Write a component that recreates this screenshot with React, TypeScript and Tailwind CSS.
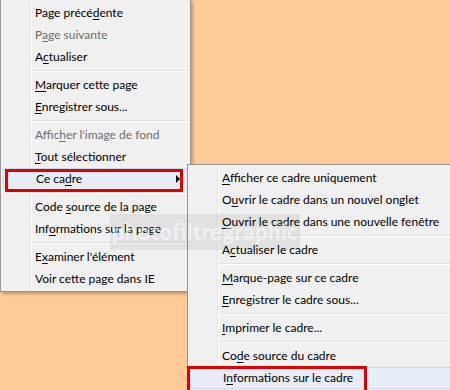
import React from "react";

type Entry =
  | { sep: true }
  | { sep?: false; label: string; key?: number; disabled?: boolean; hover?: boolean; sub?: boolean };

const mainMenu: Entry[] = [
  { label: "Page précédente", key: 10 },
  { label: "Page suivante", key: 1, disabled: true },
  { label: "Actualiser", key: 1 },
  { sep: true },
  { label: "Marquer cette page", key: 0 },
  { label: "Enregistrer sous...", key: 0 },
  { sep: true },
  { label: "Afficher l'image de fond", key: 5, disabled: true },
  { label: "Tout sélectionner", key: 0 },
  { label: "Ce cadre", key: 5, hover: true, sub: true },
  { sep: true },
  { label: "Code source de la page", key: 5 },
  { label: "Informations sur la page", key: 3 },
  { sep: true },
  { label: "Examiner l'élément", key: 1 },
  { label: "Voir cette page dans IE" },
];

const subMenu: Entry[] = [
  { label: "Afficher ce cadre uniquement", key: 0 },
  { label: "Ouvrir le cadre dans un nouvel onglet", key: 1 },
  { label: "Ouvrir le cadre dans une nouvelle fenêtre", key: 0 },
  { sep: true },
  { label: "Actualiser le cadre", key: 1 },
  { sep: true },
  { label: "Marque-page sur ce cadre", key: 0 },
  { label: "Enregistrer le cadre sous...", key: 0 },
  { sep: true },
  { label: "Imprimer le cadre...", key: 0 },
  { sep: true },
  { label: "Code source du cadre", key: 2 },
  { label: "Informations sur le cadre", key: 1, hover: true },
];

const Label = ({ text, k }: { text: string; k?: number }) => {
  if (k === undefined) return <>{text}</>;
  return (
    <>
      {text.slice(0, k)}
      <span className="underline underline-offset-2">{text[k]}</span>
      {text.slice(k + 1)}
    </>
  );
};

const Menu = ({ items }: { items: Entry[] }) => (
  <div className="relative flex flex-col">
    {/* gutter */}
    <div className="absolute top-0 bottom-0 left-[27px] flex">
      <div className="w-px bg-[#e2e3e3]" />
      <div className="w-px bg-white" />
    </div>
    {items.map((it, i) =>
      it.sep ? (
        <div key={i} className="flex h-[6px] flex-col justify-center pr-[2px] pl-[29px]">
          <div className="h-px bg-[#e0e0e0]" />
          <div className="h-px bg-white" />
        </div>
      ) : (
        <div
          key={i}
          className={
            "relative flex h-[22px] items-center rounded-[3px] pl-[32px] " +
            (it.hover ? "border border-[#cddaea] bg-[#e6edf7] pl-[31px] " : "") +
            (it.disabled ? "text-[#6d6d6d]" : "text-black")
          }
        >
          <span className="whitespace-nowrap">
            <Label text={it.label} k={it.key} />
          </span>
          {it.sub && (
            <svg className="absolute right-[6px]" width="5" height="8" viewBox="0 0 5 8">
              <path d="M0 0 L4 4 L0 8 Z" fill="#000" />
            </svg>
          )}
        </div>
      )
    )}
  </div>
);

export default function App() {
  return (
    <div
      className="relative h-[390px] w-[450px] overflow-hidden bg-[#ffca96] text-[12px] leading-none"
      style={{ fontFamily: "Lato, 'Noto Sans', sans-serif" }}
    >
      <div className="absolute top-[-1px] left-0 w-[191px] border border-[#979797] bg-[#f0f0f0] px-[2px] pt-[2px] pb-px shadow-[2px_2px_3px_rgba(0,0,0,0.25)]">
        <Menu items={mainMenu} />
      </div>

      <div className="absolute top-[164px] left-[187px] w-[280px] border border-[#979797] bg-[#f0f0f0] px-[2px] pt-[2px] pb-6">
        <Menu items={subMenu} />
      </div>

      {/* watermark over both menus */}
      <div className="absolute top-[214px] left-[110px] flex h-[36px] w-[190px] items-center justify-center bg-black/[0.06] text-[22px] font-bold tracking-wide text-white/50">
        photofiltregraphic
      </div>

      <div className="absolute top-[169px] left-[5px] h-[23px] w-[178px] border-[3px] border-[#e00000]" />
      <div className="absolute top-[366px] left-[187px] h-[30px] w-[180px] border-[3px] border-[#e00000]" />
    </div>
  );
}
